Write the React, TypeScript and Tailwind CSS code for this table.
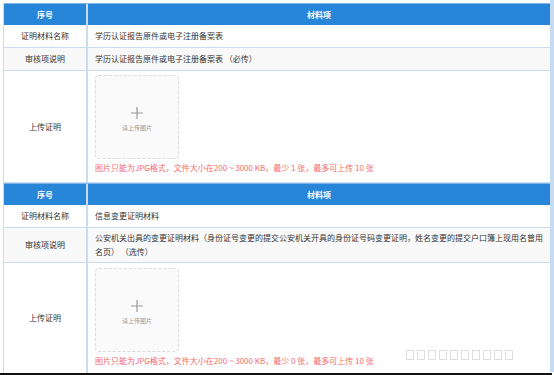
import React from "react";

const font = { fontFamily: '"Noto Sans CJK SC", "Noto Sans", sans-serif' };

function Header() {
  return (
    <div className="flex h-[22px] bg-[#2886d9] border-t border-[#7fb6ea] text-white text-[8px] font-bold">
      <div className="w-[84px] flex items-center justify-center border-r-2 border-[#c9dcf1]">序号</div>
      <div className="flex-1 flex items-center justify-center">材料项</div>
    </div>
  );
}

function Row({ label, children, h, alt }: { label: string; children: React.ReactNode; h: string; alt?: boolean }) {
  return (
    <div className={`flex border-b border-[#c9dcf1] ${h} ${alt ? "bg-[#f9f9f9]" : "bg-white"}`}>
      <div className="w-[84px] flex items-center justify-center border-r-2 border-[#c9dcf1] text-[#333]">{label}</div>
      <div className="flex-1 flex items-center pl-[7px] pr-[1px] text-[#333]">{children}</div>
    </div>
  );
}

function Upload({ min }: { min: number }) {
  return (
    <div className="flex flex-col pt-[4px]">
      <div className="w-[84px] h-[84px] rounded-[4px] border border-dashed border-[#dcdcdc] bg-[#fafafa] flex flex-col items-center justify-center">
        <svg width="14" height="14" viewBox="0 0 14 14" className="mt-[4px]">
          <path d="M7 1v12M1 7h12" stroke="#9a9a9a" strokeWidth="1.2" />
        </svg>
        <div className="text-[6px] text-[#999] mt-[3px]">请上传图片</div>
      </div>
      <div className="text-[8px] text-[#f46a6a] mt-[4px] leading-[10px]">
        图片只能为JPG格式，文件大小在200 ~ 3000 KB，最少 {min} 张，最多可上传 10 张
      </div>
    </div>
  );
}

export default function App() {
  return (
    <div className="w-[554px] h-[375px] bg-white relative overflow-hidden text-[8px]" style={font}>
      <div className="absolute right-0 top-0 w-[4px] h-[372px] bg-[#c6dcf2]" />
      <div className="pt-[3px] pl-[3px] w-[550px]">
        <div className="border-l border-[#c9dcf1]">
          <Header />
          <Row label="证明材料名称" h="h-[23px]">学历认证报告原件或电子注册备案表</Row>
          <Row label="审核项说明" h="h-[23px]" alt>学历认证报告原件或电子注册备案表 （必传）</Row>
          <div className="flex h-[112px] border-b border-[#c9dcf1] bg-white">
            <div className="w-[84px] flex items-center justify-center border-r-2 border-[#c9dcf1] text-[#333]">上传证明</div>
            <div className="flex-1 pl-[7px]"><Upload min={1} /></div>
          </div>
          <Header />
          <Row label="证明材料名称" h="h-[23px]">信息变更证明材料</Row>
          <Row label="审核项说明" h="h-[35px]" alt>
            <div className="leading-[14px]">
              公安机关出具的变更证明材料（身份证号变更的提交公安机关开具的身份证号码变更证明，姓名变更的提交户口簿上现用名曾用名页） （选传）
            </div>
          </Row>
          <div className="flex h-[110px] bg-white relative">
            <div className="w-[84px] flex items-center justify-center border-r-2 border-[#c9dcf1] text-[#333]">上传证明</div>
            <div className="flex-1 pl-[7px] pt-[1px]"><Upload min={0} /></div>
            <div className="absolute left-[402px] top-[87px] flex gap-[3px]">
              {Array.from({ length: 10 }).map((_, i) => (
                <div key={i} className="w-[8px] h-[10px] border border-[#dedede]" />
              ))}
            </div>
          </div>
        </div>
      </div>
      <div className="absolute left-0 bottom-0 w-[552px] h-[2px] bg-[#111]" />
    </div>
  );
}
